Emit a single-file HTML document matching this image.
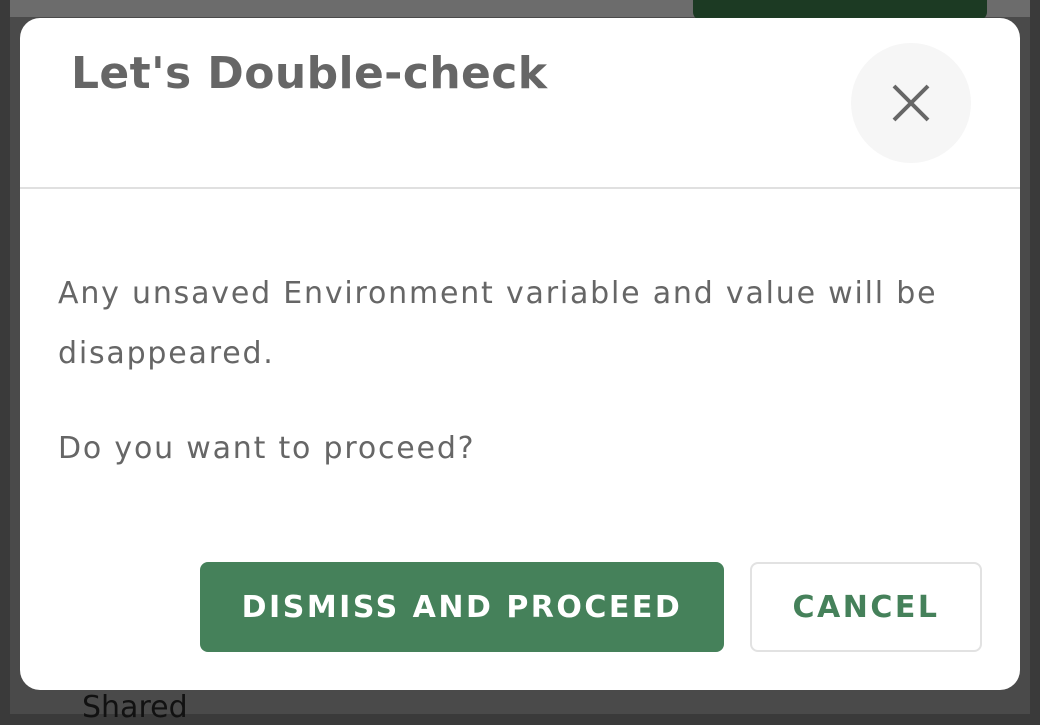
<!DOCTYPE html>
<html><head><style>
html,body{margin:0;padding:0;}
body{width:1040px;height:714px;background:#3a3a3a;position:relative;overflow:hidden;font-family:"DejaVu Sans","Liberation Sans",sans-serif;}
.panel{position:absolute;left:10px;top:0;width:1020px;height:714px;background:#4a4a4a;}
.topbar{position:absolute;left:10px;top:0;width:1020px;height:17px;background:#6c6c6c;}
.gbtn{position:absolute;left:693px;top:-10px;width:294px;height:30px;background:#1c3a23;border-radius:8px;}
.shared{position:absolute;left:82px;top:690px;font-size:30px;color:#111;}
.modal{position:absolute;left:20px;top:18px;width:1000px;height:672px;background:#fff;border-radius:20px;}
h1{position:absolute;left:51px;top:30px;margin:0;font-size:44px;font-weight:bold;color:#666;letter-spacing:0.4px;}
.close{position:absolute;left:831px;top:25px;width:120px;height:120px;border-radius:50%;background:#f6f6f6;}
.div{position:absolute;left:0;top:169px;width:1000px;height:2px;background:#e0e0e0;}
p{position:absolute;left:38px;margin:0;font-size:30px;color:#666;letter-spacing:1.8px;}
.b1{position:absolute;left:180px;top:544px;width:524px;height:90px;background:#45815a;border-radius:8px;color:#fff;font-size:30px;font-weight:bold;letter-spacing:2.5px;display:flex;align-items:center;justify-content:center;}
.b2{position:absolute;left:730px;top:544px;width:228px;height:86px;border:2px solid #e2e2e2;border-radius:8px;color:#45815a;font-size:30px;font-weight:bold;letter-spacing:2.5px;display:flex;align-items:center;justify-content:center;}
</style></head><body>
<div class="panel"></div><div class="topbar"></div><div class="gbtn"></div>
<div class="shared">Shared</div>
<div class="modal">
<h1>Let's Double-check</h1>
<div class="close"><svg width="120" height="120" viewBox="0 0 120 120"><path d="M43 43L77 77M77 43L43 77" stroke="#666" stroke-width="4" fill="none"/></svg></div>
<div class="div"></div>
<p style="top:258px">Any unsaved Environment variable and value will be</p>
<p style="top:318px">disappeared.</p>
<p style="top:413px">Do you want to proceed?</p>
<div class="b1">DISMISS AND PROCEED</div>
<div class="b2">CANCEL</div>
</div>
</body></html>
